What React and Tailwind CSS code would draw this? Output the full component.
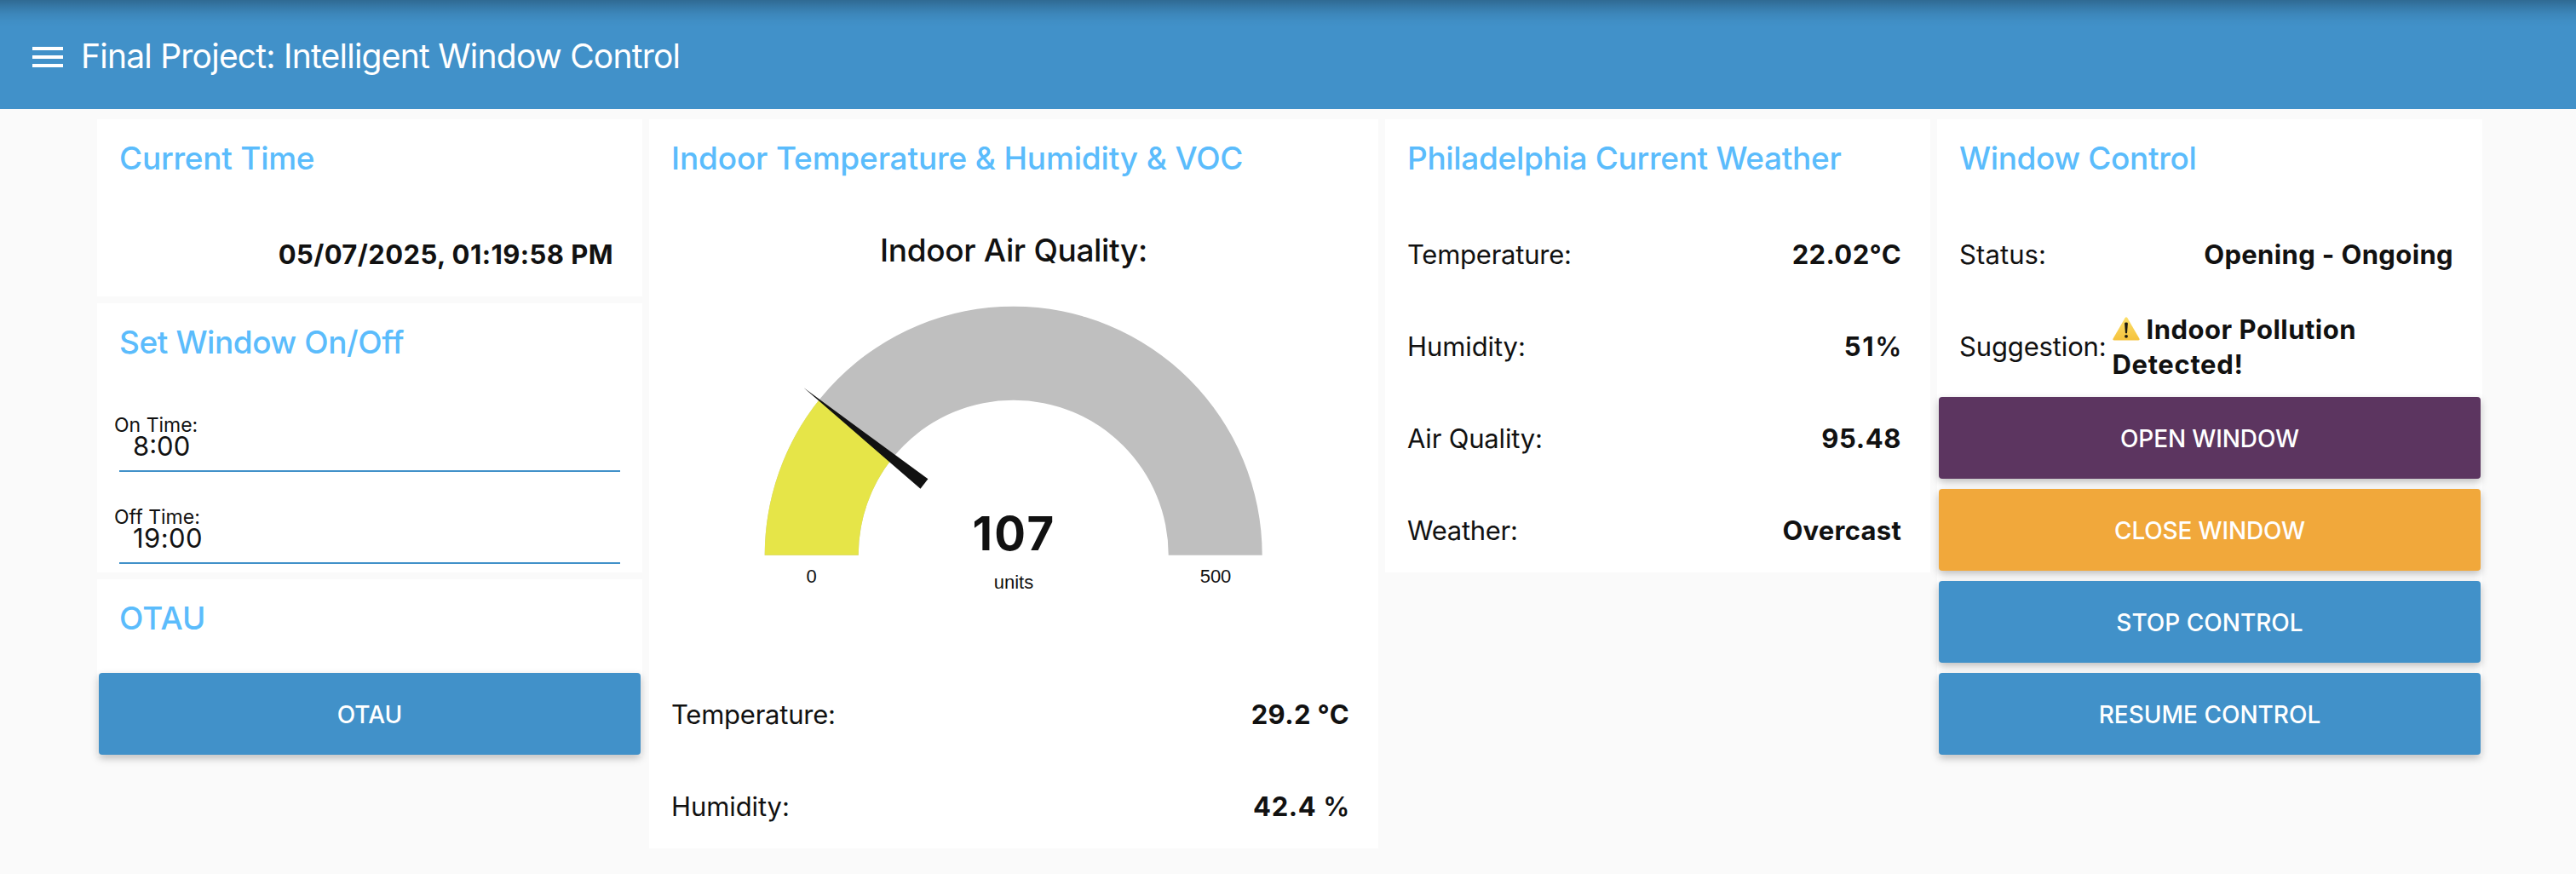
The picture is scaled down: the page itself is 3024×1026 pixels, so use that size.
import React from 'react';

function Card({ title, titleClass = '', children }) {
  return (
    <section className="flex flex-col gap-3 bg-white p-0.5">
      <h2
        className={`h-24 pl-6 pt-[19px] text-[37px] leading-[50px] font-medium text-[#5bbcfc] whitespace-nowrap ${titleClass}`}
      >
        {title}
      </h2>
      {children}
    </section>
  );
}

function Row({ label, labelClass = '', value, valueClass = '' }) {
  return (
    <div className="flex h-24 items-center justify-between pl-6 pr-8 pt-px text-[31px] leading-[41px] whitespace-nowrap">
      <span className={labelClass}>{label}</span>
      <span className={`font-bold ${valueClass}`}>{value}</span>
    </div>
  );
}

function Field({ label, value, valueClass = '' }) {
  return (
    <div className="h-24 pt-[21px]">
      <div className="pl-[18px] text-[23px] leading-6">{label}</div>
      <div
        className={`mx-6 h-[43px] border-b-2 border-[#4191c9] pl-4 text-[31px] leading-[26px] ${valueClass}`}
      >
        {value}
      </div>
    </div>
  );
}

function Button({ color = 'bg-[#4191c9]', className = '', children }) {
  return (
    <button
      className={`h-24 w-full rounded-[4px] pt-0.5 text-center text-[28px] font-medium text-white shadow-[0_4px_10px_rgba(0,0,0,0.26)] ${color} ${className}`}
    >
      {children}
    </button>
  );
}

function WarningIcon() {
  return (
    <svg viewBox="0 0 32 28" className="mr-2 inline-block h-7 w-8 align-[-2px]" aria-label="warning">
      <defs>
        <linearGradient id="warn" x1="0" y1="0" x2="0" y2="1">
          <stop offset="0" stopColor="#fbdf6b" />
          <stop offset="1" stopColor="#f5c23c" />
        </linearGradient>
      </defs>
      <path
        d="M14.6 1.3 Q16 -0.6 17.4 1.3 L31.3 25.2 Q32.2 27.4 30 27.6 H2 Q-0.2 27.4 0.7 25.2 Z"
        fill="url(#warn)"
      />
      <path d="M14.1 7.6 Q14.1 6.4 16 6.4 Q17.9 6.4 17.9 7.6 L17 19.2 H15 Z" fill="#1c1a10" />
      <circle cx="16" cy="22.8" r="1.9" fill="#1c1a10" />
    </svg>
  );
}

function Gauge({ value, max }) {
  const cx = 425.7;
  const cy = 401.7;
  const outer = 292;
  const inner = 182;
  const a = Math.PI * (1 - value / max);
  const at = (r, t) => `${cx + r * Math.cos(t)} ${cy - r * Math.sin(t)}`;
  const arc = (from, to) =>
    `M${at(outer, from)} A${outer} ${outer} 0 0 1 ${at(outer, to)} L${at(inner, to)} A${inner} ${inner} 0 0 0 ${at(inner, from)} Z`;
  return (
    <svg viewBox="0 0 852 528" className="h-[528px] w-full">
      <g fill="#111" textAnchor="middle">
        <text x="426" y="57" className="font-['Inter'] text-[37px] font-medium tracking-[-0.33px]">
          Indoor Air Quality:
        </text>
        <path d={arc(Math.PI, 0)} fill="#bfbfbf" />
        <path d={arc(Math.PI, a)} fill="#e6e548" />
        <path d="M179.6 205.3 L325.4 312.3 L316.5 323.7 Z" />
        <text x="426.5" y="396" className="font-['Inter'] text-[54.5px] font-bold tracking-[2.4px]">
          {value}
        </text>
        <g className="font-['Liberation_Sans'] text-[22px]">
          <text x="426" y="441">units</text>
          <text x="188.5" y="434">0</text>
          <text x="663" y="434">{max}</text>
        </g>
      </g>
    </svg>
  );
}

export default function App() {
  return (
    <div className="h-[1026px] w-[3024px] overflow-hidden bg-[#fafafa] font-['Inter',sans-serif] text-[#111]">
      <header className="flex h-32 items-start bg-[#4191c9] bg-[linear-gradient(to_bottom,rgba(0,0,0,0.27)_0px,rgba(0,0,0,0.17)_8px,rgba(0,0,0,0.08)_16px,rgba(0,0,0,0.02)_25px,transparent_32px)] pl-[38px] text-white">
        <div className="mt-[55px] flex w-9 flex-col gap-1.5">
          <span className="h-1 bg-white" />
          <span className="h-1 bg-white" />
          <span className="h-1 bg-white" />
        </div>
        <h1 className="mt-10 ml-[21px] text-[39px] leading-[52px] tracking-[-0.77px] whitespace-nowrap">
          Final Project: Intelligent Window Control
        </h1>
      </header>

      <main className="flex items-start gap-2 pt-3 pl-[114px]">
        <div className="flex w-[640px] flex-col gap-2">
          <Card title="Current Time" titleClass="tracking-[-0.25px]">
            <Row label="" value="05/07/2025, 01:19:58 PM" valueClass="tracking-[0.42px]" />
          </Card>
          <Card title="Set Window On/Off" titleClass="tracking-[-0.42px]">
            <Field label="On Time:" value="8:00" />
            <Field label="Off Time:" value="19:00" valueClass="tracking-[0.4px]" />
          </Card>
          <Card title="OTAU" titleClass="tracking-[0.1px]">
            <Button>OTAU</Button>
          </Card>
        </div>

        <div className="w-[856px]">
          <Card title="Indoor Temperature & Humidity & VOC" titleClass="tracking-[-0.16px]">
            <Gauge value={107} max={500} />
            <Row
              label="Temperature:"
              labelClass="tracking-[-0.24px]"
              value="29.2 °C"
              valueClass="tracking-[0.39px]"
            />
            <Row
              label="Humidity:"
              labelClass="tracking-[-0.1px]"
              value={
                <>
                  42.4 <span className="-mr-px font-semibold">%</span>
                </>
              }
              valueClass="tracking-[0.6px]"
            />
          </Card>
        </div>

        <div className="w-[640px]">
          <Card title="Philadelphia Current Weather" titleClass="tracking-[-0.32px]">
            <Row
              label="Temperature:"
              labelClass="tracking-[-0.24px]"
              value="22.02°C"
              valueClass="tracking-[0.39px]"
            />
            <Row
              label="Humidity:"
              labelClass="tracking-[-0.1px]"
              value={
                <>
                  51<span className="-mr-0.5 font-semibold">%</span>
                </>
              }
              valueClass="tracking-[1.6px]"
            />
            <Row
              label="Air Quality:"
              labelClass="tracking-[-0.19px]"
              value="95.48"
              valueClass="tracking-[0.6px]"
            />
            <Row
              label="Weather:"
              labelClass="tracking-[-0.28px]"
              value="Overcast"
              valueClass="tracking-[0.26px]"
            />
          </Card>
        </div>

        <div className="w-[640px]">
          <Card title="Window Control" titleClass="tracking-[-0.36px]">
            <Row
              label="Status:"
              labelClass="tracking-[0.1px]"
              value="Opening - Ongoing"
              valueClass="tracking-[0.36px]"
            />
            <div className="flex h-24 items-center pt-px pl-6 text-[31px] leading-[41px] whitespace-nowrap">
              <span className="tracking-[-0.15px]">Suggestion:</span>
              <div className="ml-[7px] font-bold">
                <div className="tracking-[0.5px]">
                  <WarningIcon />
                  Indoor Pollution
                </div>
                <div className="tracking-[0.65px]">Detected!</div>
              </div>
            </div>
            <Button color="bg-[#5c3560]" className="tracking-[-0.13px]">OPEN WINDOW</Button>
            <Button color="bg-[#f1a83b]" className="tracking-[-0.16px]">CLOSE WINDOW</Button>
            <Button>STOP CONTROL</Button>
            <Button>RESUME CONTROL</Button>
          </Card>
        </div>
      </main>
    </div>
  );
}
